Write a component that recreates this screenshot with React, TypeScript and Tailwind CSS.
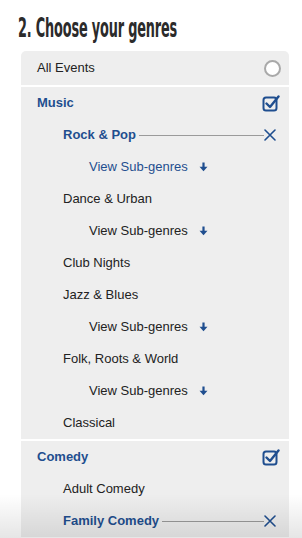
import { ReactNode } from "react"

const blue = "text-[#1f4e8f]"

function CheckedBox() {
    return (
        <svg width="18" height="18" viewBox="0 0 18 18" className="shrink-0">
            <rect x="1.5" y="3.5" width="13" height="13" rx="2.5" fill="none" stroke="#1f4e8f" strokeWidth="2" />
            <path d="M4.5 9.5 L8 13 L16.5 2.5" fill="none" stroke="#1f4e8f" strokeWidth="2.4" strokeLinecap="round" strokeLinejoin="round" />
        </svg>
    )
}

function Radio() {
    return <span className="w-[17px] h-[17px] rounded-full border-2 border-[#a9a9a9] bg-white shrink-0" />
}

function Cross() {
    return (
        <svg width="12" height="12" viewBox="0 0 12 12" className="shrink-0 mr-[1px]">
            <path d="M1 1 L11 11 M11 1 L1 11" stroke="#1f4e8f" strokeWidth="1.6" strokeLinecap="round" />
        </svg>
    )
}

function DownArrow() {
    return (
        <svg width="9" height="10" viewBox="0 0 9 10" className="shrink-0 ml-[11px]">
            <path d="M4.5 0.5 V7" stroke="#1f4e8f" strokeWidth="2.2" />
            <path d="M0.5 4.8 L4.5 9.3 L8.5 4.8 Z" fill="#1f4e8f" />
        </svg>
    )
}

function Row({ indent, children }: { indent: string; children: ReactNode }) {
    return <div className={`flex items-center h-8 pr-[12px] ${indent}`}>{children}</div>
}

function Genre({ label, selected }: { label: string; selected?: boolean }) {
    if (selected) {
        return (
            <Row indent="pl-[42px]">
                <span className={`font-bold ${blue}`}>{label}</span>
                <span className="flex-1 h-px bg-[#9a9a9a] ml-[3px]" />
                <Cross />
            </Row>
        )
    }
    return (
        <Row indent="pl-[42px]">
            <span className="text-[#222]">{label}</span>
        </Row>
    )
}

function SubGenres({ active }: { active?: boolean }) {
    return (
        <Row indent="pl-[68px]">
            <span className={active ? blue : "text-[#222]"}>View Sub-genres</span>
            <DownArrow />
        </Row>
    )
}

function Category({ label }: { label: string }) {
    return (
        <div className="flex items-center justify-between h-8 pl-4 pr-[9px]">
            <span className={`font-bold ${blue}`}>{label}</span>
            <CheckedBox />
        </div>
    )
}

export default function App() {
    return (
        <div className="relative min-h-[538px] bg-white font-['Liberation_Sans',Arial,sans-serif] text-[13px] overflow-hidden">
            <div className="h-[51px] pt-[14px]">
                <h2 className="ml-[18px] text-[#2b2b2b] text-[26px] leading-[28px] font-bold font-['DejaVu_Sans_Condensed',sans-serif] tracking-[-0.3px] origin-left scale-x-[0.55] whitespace-nowrap">
                    2. Choose your genres
                </h2>
            </div>

            <div className="ml-[21px] w-[268px] flex flex-col gap-[2px] bg-white">
                <div className="flex items-center justify-between h-[34px] pl-4 pr-[8px] bg-[#eeeeee] rounded-t-[5px]">
                    <span className="text-[#222]">All Events</span>
                    <Radio />
                </div>

                <div className="bg-[#eeeeee]">
                    <Category label="Music" />
                    <Genre label="Rock & Pop" selected />
                    <SubGenres active />
                    <Genre label="Dance & Urban" />
                    <SubGenres />
                    <Genre label="Club Nights" />
                    <Genre label="Jazz & Blues" />
                    <SubGenres />
                    <Genre label="Folk, Roots & World" />
                    <SubGenres />
                    <Genre label="Classical" />
                </div>

                <div className="bg-[#eeeeee]">
                    <Category label="Comedy" />
                    <Genre label="Adult Comedy" />
                    <Genre label="Family Comedy" selected />
                </div>
            </div>

            <div className="absolute left-0 right-0 bottom-0 h-[44px] bg-gradient-to-b from-transparent to-black/10 pointer-events-none" />
        </div>
    )
}
